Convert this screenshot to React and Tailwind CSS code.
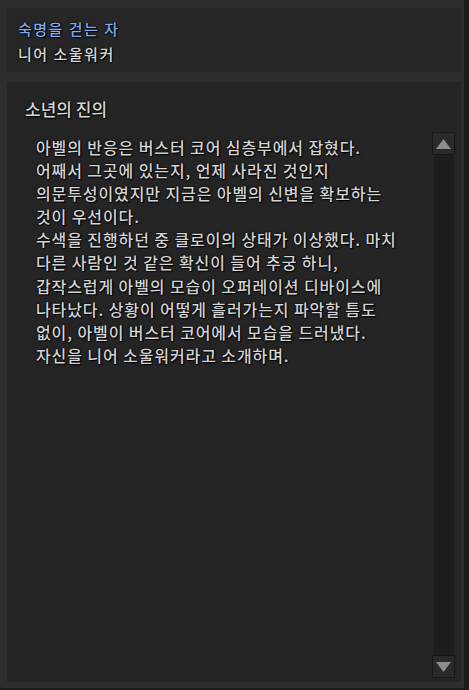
import React from "react";

const lines = [
  "아벨의 반응은 버스터 코어 심층부에서 잡혔다.",
  "어째서 그곳에 있는지, 언제 사라진 것인지",
  "의문투성이였지만 지금은 아벨의 신변을 확보하는",
  "것이 우선이다.",
  "수색을 진행하던 중 클로이의 상태가 이상했다. 마치",
  "다른 사람인 것 같은 확신이 들어 추궁 하니,",
  "갑작스럽게 아벨의 모습이 오퍼레이션 디바이스에",
  "나타났다. 상황이 어떻게 흘러가는지 파악할 틈도",
  "없이, 아벨이 버스터 코어에서 모습을 드러냈다.",
  "자신을 니어 소울워커라고 소개하며.",
];

const font = { fontFamily: '"Noto Sans CJK KR", "Noto Sans", sans-serif' };

function Arrow({ up }) {
  return (
    <div className="w-[23px] h-[23px] bg-[#2a2a2a] border border-[#171717] flex items-center justify-center">
      <svg width="15" height="10" viewBox="0 0 15 10">
        {up ? (
          <polygon points="7.5,0 15,10 0,10" fill="#8d8d8d" />
        ) : (
          <polygon points="0,0 15,0 7.5,10" fill="#8d8d8d" />
        )}
      </svg>
    </div>
  );
}

export default function App() {
  return (
    <div
      className="w-[469px] h-[690px] bg-[#2d2d2d] border-r-[5px] border-b-[2px] border-[#1b1b1b] pt-[8px] pl-[7px] pr-[3px] pb-[6px] flex flex-col gap-[10px] overflow-hidden font-medium [text-shadow:0_0_2px_#000,1px_1px_1px_#000,0_0_1px_#000]"
      style={font}
    >
      <div className="h-[64px] bg-[#262626] pl-[11px] pt-[8px] shrink-0">
        <div className="text-[15px] leading-[25px] tracking-[1.5px] text-[#80abf0]">숙명을 걷는 자</div>
        <div className="text-[15px] leading-[25px] tracking-[1.5px] text-[#d8d8d8]">니어 소울워커</div>
      </div>
      <div className="flex-1 bg-[#242424] flex flex-col">
        <div className="pl-[18px] pt-[14px] text-[17px] leading-[25px] text-[#d6d6d6]">소년의 진의</div>
        <div className="flex flex-1 pt-[11px] pb-[4px]">
          <div className="flex-1 pl-[29px] pt-[4px] text-[16px] leading-[23.1px] tracking-[0.9px] text-[#d4d4d4]">
            {lines.map((l, i) => (
              <div key={i} className="whitespace-pre">{l}</div>
            ))}
          </div>
          <div className="w-[23px] mr-[6px] flex flex-col items-center">
            <Arrow up />
            <div className="flex-1 w-[20px] bg-[#1d1d1d]" />
            <Arrow />
          </div>
        </div>
      </div>
    </div>
  );
}
